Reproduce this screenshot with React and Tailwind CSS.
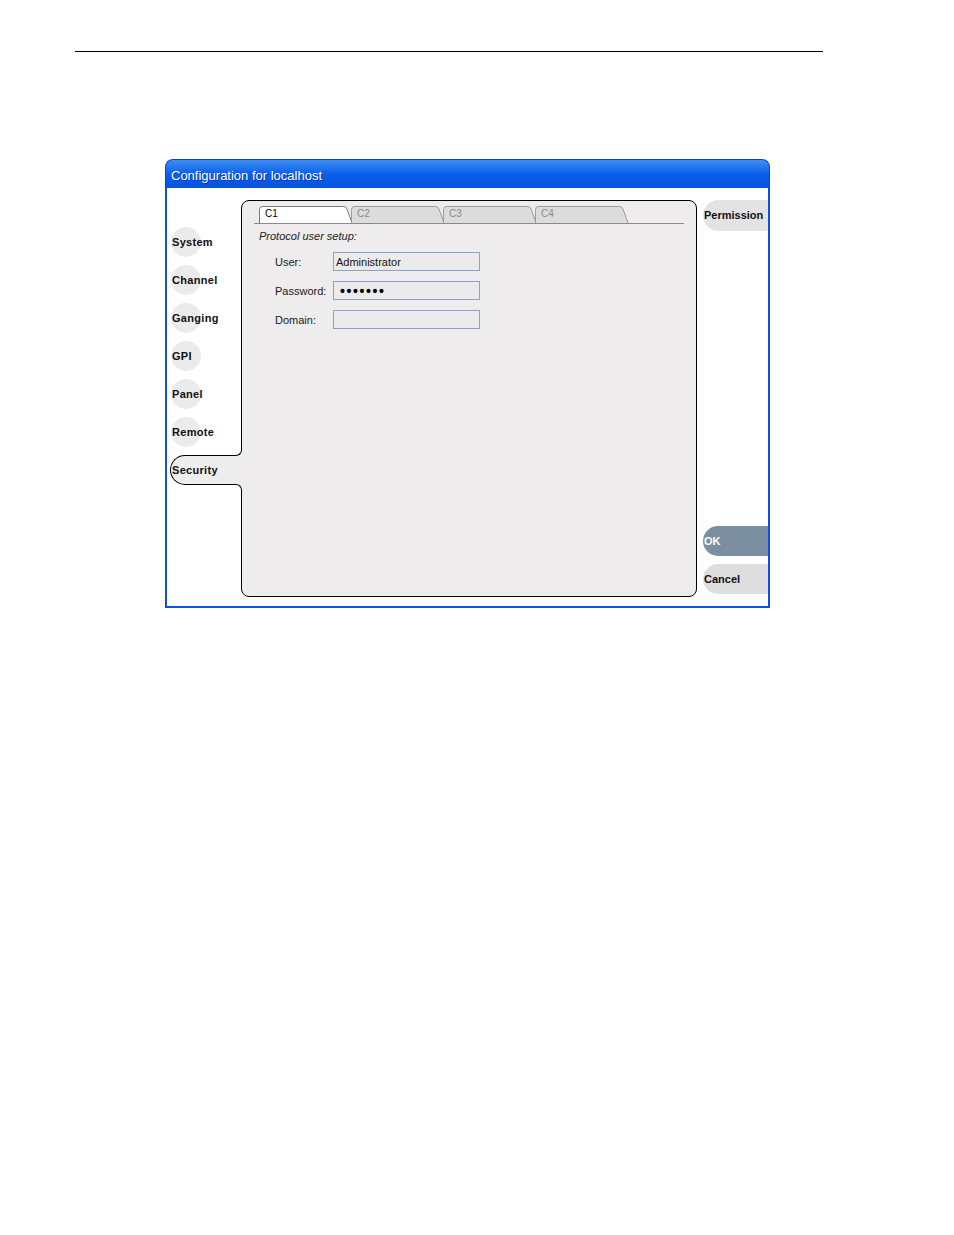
import React from 'react'

const navItems = ['System', 'Channel', 'Ganging', 'GPI', 'Panel', 'Remote']

function Tab({ label, active }) {
  return (
    <div className="relative h-[17px] w-[92px]">
      <svg className="absolute left-0 top-0 overflow-visible" width="94" height="17" viewBox="0 0 94 17">
        <path
          d="M0.5 17 L0.5 3.5 Q0.5 0.5 3.5 0.5 L84.5 0.5 Q87 0.5 88 3 L93 17"
          fill={active ? '#ffffff' : '#dcdcdc'}
          stroke={active ? '#7a7a7a' : '#9c9c9c'}
          strokeWidth="1"
        />
      </svg>
      <span
        className={`relative block pl-[6px] pt-[1px] text-[10px] leading-[14px] ${
          active ? 'text-black' : 'text-[#8a8a8a]'
        }`}
      >
        {label}
      </span>
    </div>
  )
}

function Field({ label, value, dots }) {
  return (
    <div className="flex items-center h-[19px]">
      <span className="w-[58px] pt-[2px] text-[11px] text-[#1a1a1a]">{label}</span>
      <div className="w-[147px] h-[19px] border border-[#8ca3c3] bg-[#ebebeb] flex items-center pl-[2px] pt-[1px]">
        {dots ? (
          <span className="pl-[4px] text-[14px] font-bold tracking-[1.6px] leading-none">•••••••</span>
        ) : (
          <span className="text-[11px] text-[#111]">{value}</span>
        )}
      </div>
    </div>
  )
}

export default function App() {
  return (
    <div className="min-h-[1235px] bg-white font-['Liberation_Sans',Arial,sans-serif]">
      <div className="pt-[51px] pl-[75px]">
        <div className="h-px w-[748px] bg-black" />
      </div>

      <div className="ml-[165px] mt-[107px] w-[605px]">
        <div className="h-[29px] rounded-t-[8px] bg-linear-to-b from-[#3d8ef6] via-[#0a5fe9] to-[#0652de] border-x border-t border-[#0a45c8] pl-[5px] pt-[6px] text-[13px] text-white [text-shadow:1px_1px_0_#0a3aa8]">
          Configuration for localhost
        </div>

        <div className="flex h-[420px] border-x-2 border-b-2 border-[#0b52e0] bg-white">
          {/* left navigation */}
          <div className="w-[74px] pt-[35px]">
            {navItems.map((item) => (
              <div key={item} className="h-[38px] flex items-center pl-[4px]">
                <div className="w-[30px] h-[30px] rounded-full bg-[#ebebeb] flex items-center pl-[1px] whitespace-nowrap text-[11px] font-bold tracking-[0.3px] text-[#111]">
                  {item}
                </div>
              </div>
            ))}
            <div className="h-[38px] flex items-center">
              <div className="relative z-10 ml-[3px] h-[30px] w-[65px] rounded-l-[15px] border border-r-0 border-black bg-[#eeecec] flex items-center pl-[1px] text-[11px] font-bold tracking-[0.3px] text-[#111]">
                Security
                <div className="absolute left-full -top-[7px] h-[7px] w-[7px] bg-[#eeecec]">
                  <div className="h-full w-full rounded-br-[6px] border-r border-b border-black bg-white" />
                </div>
                <div className="absolute left-full top-0 h-[28px] w-[9px] bg-[#eeecec]" />
                <div className="absolute left-full top-full h-[7px] w-[7px] bg-[#eeecec]">
                  <div className="h-full w-full rounded-tr-[6px] border-r border-t border-black bg-white" />
                </div>
              </div>
            </div>
          </div>

          {/* main panel */}
          <div className="mt-[12px] h-[397px] w-[456px] rounded-[8px] border border-black bg-[#eeecec] px-[12px] pt-[5px]">
            <div className="flex border-b border-[#8a8a8a] pl-[5px]">
              <Tab label="C1" active />
              <Tab label="C2" />
              <Tab label="C3" />
              <Tab label="C4" />
            </div>
            <div className="pl-[5px] pt-[6px] text-[11px] italic leading-[13px] text-[#222]">
              Protocol user setup:
            </div>
            <div className="pl-[21px] pt-[9px] flex flex-col gap-[10px]">
              <Field label="User:" value="Administrator" />
              <Field label="Password:" dots />
              <Field label="Domain:" value="" />
            </div>
          </div>

          {/* right buttons */}
          <div className="flex-1 flex flex-col justify-between pl-[6px] pt-[12px] pb-[12px]">
            <div className="h-[31px] rounded-l-full bg-[#e3e3e3] flex items-center pl-[1px] text-[11px] font-bold text-[#111]">
              Permission
            </div>
            <div className="flex flex-col gap-[8px]">
              <div className="h-[30px] rounded-l-full bg-[#7c8fa1] flex items-center pl-[1px] text-[11px] font-bold text-white">
                OK
              </div>
              <div className="h-[30px] rounded-l-full bg-[#dedede] flex items-center pl-[1px] text-[11px] font-bold text-[#111]">
                Cancel
              </div>
            </div>
          </div>
        </div>
      </div>
    </div>
  )
}
